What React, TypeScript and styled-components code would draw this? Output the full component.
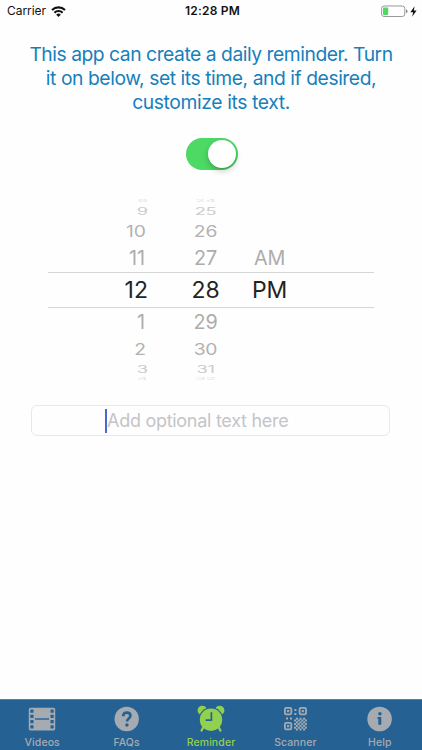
import React from "react";
import styled, { createGlobalStyle } from "styled-components";

const GlobalStyle = createGlobalStyle`
  * { box-sizing: border-box; }
  body { margin: 0; background: #fefefe; }
`;

const Screen = styled.div`
  width: 422px;
  height: 750px;
  display: flex;
  flex-direction: column;
  overflow: hidden;
  background: #fefefe;
  font-family: Inter, "Liberation Sans", sans-serif;
`;

const StatusBar = styled.header`
  height: 22px;
  flex: none;
  display: grid;
  grid-template-columns: 1fr auto 1fr;
  align-items: center;
  padding: 0 4px 0 7px;
  color: #111;
  font-size: 12px;
  line-height: 22px;
`;

const Carrier = styled.div`
  display: flex;
  align-items: center;
  gap: 5px;
  letter-spacing: -0.05px;
`;

const Clock = styled.div`
  font-weight: 600;
  letter-spacing: 0.2px;
`;

const Power = styled.div`
  display: flex;
  justify-content: flex-end;
  align-items: center;
`;

const Main = styled.main`
  flex: 1;
  display: flex;
  flex-direction: column;
  align-items: center;
`;

const Intro = styled.p`
  margin: 20px 0 0;
  color: #1680bc;
  font-size: 19.3px;
  line-height: 24px;
  text-align: center;
`;

const Line = styled.span<{ $spacing: number }>`
  display: block;
  white-space: nowrap;
  letter-spacing: ${(p) => p.$spacing}px;
`;

const Toggle = styled.button`
  width: 52px;
  height: 32px;
  margin: 24px 0 0 2px;
  padding: 2px;
  border: 0;
  border-radius: 16px;
  background: #4cd964;
  display: flex;
  justify-content: flex-end;
`;

const Knob = styled.span`
  width: 28px;
  height: 28px;
  border-radius: 50%;
  background: #fff;
  box-shadow: 0 3px 6px rgba(0, 0, 0, 0.2), 0 1px 1px rgba(0, 0, 0, 0.12);
`;

const Picker = styled.div`
  width: 326px;
  height: 184px;
  margin-top: 28px;
  display: flex;
  flex-direction: column;
`;

const PickerRow = styled.div<{ $height: number; $selected?: boolean }>`
  flex: none;
  height: ${(p) => p.$height}px;
  display: grid;
  grid-template-columns: 100px 95px 53px;
  align-items: center;
  overflow: hidden;
  border: 0 solid #d6d6d7;
  border-width: ${(p) => (p.$selected ? "1px 0" : "0")};
`;

const Cell = styled.span<{ $size: number; $squash: number; $color: string }>`
  height: 28px;
  margin: -14px 0;
  line-height: 28px;
  text-align: center;
  font-size: ${(p) => p.$size}px;
  color: ${(p) => p.$color};
  transform: scaleY(${(p) => p.$squash});
`;

const HourCell = styled(Cell)<{ $inset: number }>`
  padding-right: ${(p) => p.$inset}px;
  text-align: right;
`;

const MinuteCell = styled(Cell)`
  padding-left: 20px;
  letter-spacing: -0.2px;
`;

const PeriodCell = styled(Cell)`
  letter-spacing: -0.3px;
`;

const Field = styled.label`
  width: 359px;
  height: 31px;
  margin: 23px 1px 0 0;
  padding-left: 73px;
  border: 1px solid #e8e8e9;
  border-radius: 6px;
  display: flex;
  align-items: center;
  color: #c4c4c9;
  font-size: 18px;
  letter-spacing: -0.28px;
  white-space: nowrap;
`;

const Caret = styled.i`
  width: 2px;
  height: 24px;
  background: #4769cc;
`;

const TabBar = styled.nav`
  height: 51px;
  flex: none;
  display: grid;
  grid-template-columns: repeat(5, 1fr);
  background: #256293;
  border-top: 1px solid #5482a8;
`;

const Tab = styled.div<{ $active?: boolean }>`
  display: flex;
  flex-direction: column;
  align-items: center;
  color: ${(p) => (p.$active ? "#92d050" : "#a5abb1")};
  font-size: 10.5px;
  font-weight: 500;
  letter-spacing: 0.1px;
`;

const IconBox = styled.div`
  height: 36px;
  padding-top: 2px;
  display: flex;
  align-items: center;
`;

const TabLabel = styled.span`
  line-height: 13px;
`;

const navy = "#256293";

const WifiIcon = () => (
  <svg width="15" height="11" viewBox="0 0 15 11" fill="none" stroke="#111" strokeWidth="2.1">
    <path d="M1 4.1a9.2 9.2 0 0 1 13 0M3.4 6.7a5.8 5.8 0 0 1 8.2 0" />
    <path d="M7.5 11 5.2 8.7a3.3 3.3 0 0 1 4.6 0z" fill="#111" stroke="none" />
  </svg>
);

const BatteryIcon = () => (
  <svg width="37" height="13" viewBox="0 0 37 13">
    <rect x="0.6" y="1" width="23.2" height="10.5" rx="2.5" fill="none" stroke="#999" />
    <rect x="2" y="2.5" width="5.2" height="7.5" rx="1" fill="#4cd964" />
    <path d="M25 4.3q1.5.6 1.5 2t-1.5 2z" fill="#888" />
    <path d="m33.6 1.3-4.2 6h2.8l-1.1 4.4 4.5-6.2h-2.8z" fill="#111" />
  </svg>
);

const FilmIcon = () => (
  <svg width="28" height="24" viewBox="0 0 28 24">
    <rect x="0.8" y="0.8" width="26.4" height="22.6" rx="1.6" fill="currentColor" />
    <g fill={navy}>
      {[2.6, 7.8, 13, 18.2].map((y) => (
        <React.Fragment key={y}>
          <rect x="2.3" y={y} width="3.2" height="3.2" rx="0.5" />
          <rect x="22.5" y={y} width="3.2" height="3.2" rx="0.5" />
        </React.Fragment>
      ))}
      <rect x="7" y="11.3" width="14" height="1.4" />
    </g>
  </svg>
);

const QuestionIcon = () => (
  <svg width="26" height="26" viewBox="0 0 26 26">
    <circle cx="12.7" cy="13" r="12.2" fill="currentColor" />
    <path d="M9.2 10.2q0-3.6 3.7-3.6 3.5 0 3.5 3.1c0 2.7-3.4 2.7-3.4 5.7" fill="none" stroke={navy} strokeWidth="2.6" />
    <circle cx="12.9" cy="19" r="1.7" fill={navy} />
  </svg>
);

const AlarmIcon = () => (
  <svg width="28" height="28" viewBox="0 0 28 28" fill="currentColor">
    <circle cx="5.3" cy="5.4" r="4.7" />
    <circle cx="22.7" cy="5.4" r="4.7" />
    <path d="m6.5 22-2 3.6M21.5 22l2 3.6" stroke="currentColor" strokeWidth="2.2" strokeLinecap="round" />
    <circle cx="14" cy="14.7" r="12.4" fill={navy} clipPath="inset(0 0 13px 0)" />
    <circle cx="14" cy="14.7" r="11.2" />
    <path d="M14.4 7.2v8H8.6" fill="none" stroke={navy} strokeWidth="1.7" />
  </svg>
);

const checks = Array.from({ length: 49 }, (_, i) => ({
  x: 10.2 + (i % 7) * 1.8,
  y: 10.8 + Math.floor(i / 7) * 1.8,
})).filter((_, i) => i % 2 === 1);

const QrIcon = () => (
  <svg width="23" height="24" viewBox="0 0 23 24" fill="currentColor">
    {[[0, 0], [14.7, 0], [0, 15]].map(([x, y]) => (
      <g key={`${x}-${y}`}>
        <rect x={x + 0.9} y={y + 0.9} width="6.4" height="6.4" rx="1.4" fill="none" stroke="currentColor" strokeWidth="1.8" />
        <rect x={x + 3} y={y + 3} width="2.2" height="2.2" />
      </g>
    ))}
    <path d="M10.4 2h2v2h-2zM10.4 6h2v2h-2zM2 10.4h2v2H2zM6 10.4h2v2H6z" />
    {checks.map((c) => (
      <rect key={`${c.x}-${c.y}`} x={c.x - 0.1} y={c.y - 0.1} width="2" height="2" />
    ))}
  </svg>
);

const InfoIcon = () => (
  <svg width="26" height="26" viewBox="0 0 26 26">
    <circle cx="12.6" cy="13" r="12.3" fill="currentColor" />
    <circle cx="12.9" cy="7.7" r="1.8" fill={navy} />
    <path d="M10.4 11h3.9v7.7h-3V12.7h-.9z" fill={navy} />
  </svg>
);

interface TimeRow {
  hour: string;
  minute: string;
  period?: string;
  height: number;
  size: number;
  squash: number;
  color: string;
  inset: number;
}

const rows: TimeRow[] = [
  { hour: "8", minute: "24", height: 6, size: 17.5, squash: 0.22, color: "#e4e4e4", inset: 0 },
  { hour: "9", minute: "25", height: 14, size: 18.2, squash: 0.55, color: "#cbcbcb", inset: 0 },
  { hour: "10", minute: "26", height: 26, size: 19.3, squash: 0.82, color: "#b2b2b2", inset: 2 },
  { hour: "11", minute: "27", period: "AM", height: 28, size: 19.8, squash: 1, color: "#acacac", inset: 3 },
  { hour: "12", minute: "28", period: "PM", height: 36, size: 23, squash: 1, color: "#242424", inset: 0 },
  { hour: "1", minute: "29", height: 28, size: 19.8, squash: 1, color: "#acacac", inset: 3 },
  { hour: "2", minute: "30", height: 26, size: 19.3, squash: 0.82, color: "#b2b2b2", inset: 2 },
  { hour: "3", minute: "31", height: 14, size: 18.2, squash: 0.55, color: "#cbcbcb", inset: 0 },
  { hour: "4", minute: "32", height: 6, size: 17.5, squash: 0.22, color: "#e4e4e4", inset: 0 },
];

const tabs = [
  { label: "Videos", Icon: FilmIcon },
  { label: "FAQs", Icon: QuestionIcon },
  { label: "Reminder", Icon: AlarmIcon, active: true },
  { label: "Scanner", Icon: QrIcon },
  { label: "Help", Icon: InfoIcon },
];

export default function App() {
  return (
    <Screen>
      <GlobalStyle />
      <StatusBar>
        <Carrier>Carrier <WifiIcon /></Carrier>
        <Clock>12:28 PM</Clock>
        <Power><BatteryIcon /></Power>
      </StatusBar>
      <Main>
        <Intro>
          <Line $spacing={-0.47}>This app can create a daily reminder. Turn</Line>
          <Line $spacing={-0.44}>it on below, set its time, and if desired,</Line>
          <Line $spacing={-0.38}>customize its text.</Line>
        </Intro>
        <Toggle role="switch" aria-checked="true"><Knob /></Toggle>
        <Picker>
          {rows.map(({ hour, minute, period, height, size, squash, color, inset }) => (
            <PickerRow key={minute} $height={height} $selected={minute === "28"}>
              <HourCell $size={size} $squash={squash} $color={color} $inset={inset}>{hour}</HourCell>
              <MinuteCell $size={size} $squash={squash} $color={color}>{minute}</MinuteCell>
              {period && <PeriodCell $size={size} $squash={squash} $color={color}>{period}</PeriodCell>}
            </PickerRow>
          ))}
        </Picker>
        <Field><Caret />Add optional text here</Field>
      </Main>
      <TabBar>
        {tabs.map(({ label, Icon, active }) => (
          <Tab key={label} $active={active}>
            <IconBox><Icon /></IconBox>
            <TabLabel>{label}</TabLabel>
          </Tab>
        ))}
      </TabBar>
    </Screen>
  );
}
